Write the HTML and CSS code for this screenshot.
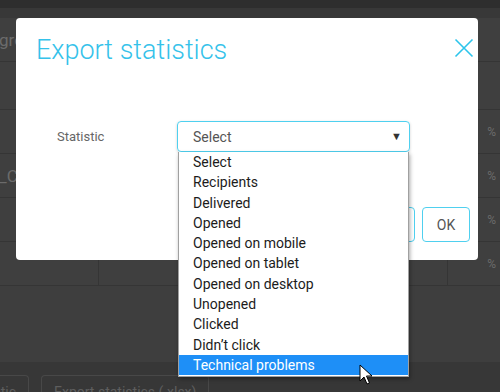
FILE: index.html
```html
<!DOCTYPE html>
<html lang="en">
  <head>
    <meta charset="UTF-8" />
    <meta name="viewport" content="width=device-width, initial-scale=1.0" />
    <title>Export statistics</title>
    <link rel="stylesheet" href="styles.css">
  </head>
  <body>
    <div class="page">
      <div class="topbar"></div>
      <div class="strip"></div>
      <div class="row"><span class="cell">group</span></div>
      <div class="row tall"></div>
      <div class="row"><span class="pct">%</span></div>
      <div class="row"><span class="cell">_Click</span><span class="pct">%</span></div>
      <div class="row"><span class="pct">%</span></div>
      <div class="row short">
        <span class="col col-a"></span>
        <span class="col col-b"></span>
        <span class="pct">%</span>
      </div>
      <div class="filler"></div>
      <div class="footer">
        <span class="bg-btn first">Statistic</span>
        <span class="bg-btn">Export statistics (.xlsx)</span>
      </div>
    </div>

    <div class="modal">
      <div class="modal-head">
        <h2>Export statistics</h2>
        <svg class="close" width="20" height="20" viewBox="0 0 20 20">
          <path d="M1.5 1.5 L18.5 18.5 M18.5 1.5 L1.5 18.5" stroke="#2cc4eb" stroke-width="1.6" fill="none" />
        </svg>
      </div>
      <div class="form-row">
        <label>Statistic</label>
        <div class="select">
          <span>Select</span>
          <span class="arrow">&#9660;</span>
        </div>
      </div>
      <div class="modal-foot">
        <button class="btn">Cancel</button>
        <button class="btn">OK</button>
      </div>
    </div>

    <ul class="options">
      <li>Select</li>
      <li>Recipients</li>
      <li>Delivered</li>
      <li>Opened</li>
      <li>Opened on mobile</li>
      <li>Opened on tablet</li>
      <li>Opened on desktop</li>
      <li>Unopened</li>
      <li>Clicked</li>
      <li>Didn’t click</li>
      <li class="active">Technical problems</li>
    </ul>

    <svg class="cursor" width="14" height="22" viewBox="0 0 14 22">
      <path d="M1 1 L1 17 L5 13 L8 20 L10.5 19 L7.5 12 L13 12 Z" fill="#fff" stroke="#000" stroke-width="1" stroke-linejoin="round" />
    </svg>
  </body>
</html>
```

FILE: styles.css
```css
body {
  margin: 0;
  font-family: Roboto, "Liberation Sans", Arial, sans-serif;
  background-color: #3b3b3b;
  overflow: hidden;
}
.page {
  width: 500px;
  height: 392px;
  display: flex;
  flex-direction: column;
}
.topbar {
  height: 8px;
  background-color: #2e2e2e;
}
.strip {
  height: 10px;
  background-color: #383838;
}
.row {
  position: relative;
  height: 43px;
  border-bottom: 1px solid #353535;
  background-color: #3f3f3f;
  display: flex;
  align-items: center;
}
.row.tall {
  height: 47px;
}
.cell {
  margin-left: -1px;
  font-size: 17px;
  color: #6b6b6b;
}
.pct {
  position: absolute;
  right: 4px;
  font-size: 12px;
  color: #6b6b6b;
}
.col {
  position: absolute;
  top: 0;
  bottom: 0;
  border-left: 1px solid #353535;
}
.col-a {
  left: 98px;
}
.col-b {
  left: 447px;
}
.filler {
  flex: 1;
  background-color: #3e3e3e;
}
.footer {
  height: 30px;
  box-sizing: border-box;
  background-color: #373737;
  display: flex;
  gap: 12px;
  padding-top: 13px;
}
.bg-btn {
  border: 1px solid #484848;
  border-bottom: none;
  border-radius: 4px 4px 0 0;
  padding: 7px 12px 0;
  font-size: 14px;
  line-height: 18px;
  color: #5e5e5e;
  white-space: nowrap;
}
.bg-btn.first {
  margin-left: -48px;
}

.modal {
  position: absolute;
  left: 16px;
  top: 18px;
  width: 462px;
  height: 242px;
  box-sizing: border-box;
  padding: 16px 6px 18px 20px;
  background-color: #fff;
  border-radius: 4px;
  display: flex;
  flex-direction: column;
}
.modal-head {
  display: flex;
  justify-content: space-between;
  align-items: flex-start;
}
.modal-head h2 {
  margin: 0;
  font-size: 27px;
  line-height: 32px;
  font-weight: 300;
  color: #35c2ea;
}
.close {
  margin-top: 4px;
  margin-right: -2px;
}
.form-row {
  display: flex;
  align-items: center;
  margin-top: 55px;
}
.form-row label {
  width: 141px;
  box-sizing: border-box;
  padding-left: 21px;
  font-size: 13px;
  color: #666;
}
.select {
  width: 233px;
  height: 31px;
  box-sizing: border-box;
  border: 1px solid #4fd0ef;
  border-radius: 4px;
  box-shadow: 0 1px 3px rgba(0, 0, 0, 0.18);
  display: flex;
  align-items: center;
  justify-content: space-between;
  padding: 0 7px 0 15px;
  font-size: 14px;
  color: #555;
}
.arrow {
  font-size: 11px;
  color: #333;
}
.modal-foot {
  margin-top: auto;
  display: flex;
  justify-content: flex-end;
  gap: 7px;
  padding-right: 2px;
}
.btn {
  height: 35px;
  min-width: 48px;
  padding: 0 12px;
  background-color: #fff;
  border: 1px solid #4fd0ef;
  border-radius: 4px;
  font-family: Roboto, "Liberation Sans", Arial, sans-serif;
  font-size: 14px;
  color: #555;
}

.options {
  position: absolute;
  left: 178px;
  top: 152px;
  width: 231px;
  box-sizing: border-box;
  margin: 0;
  padding: 0 0 1px;
  list-style: none;
  background-color: #fff;
  border: 1px solid #a0a0a0;
  border-top: none;
  box-shadow: 1px 2px 4px rgba(0, 0, 0, 0.35);
}
.options li {
  height: 20.3px;
  line-height: 20.3px;
  padding-left: 14px;
  font-size: 14px;
  color: #1c1c1c;
}
.options li.active {
  background-color: #1e8ff7;
  color: #fff;
}
.cursor {
  position: absolute;
  left: 359px;
  top: 364px;
}
```
